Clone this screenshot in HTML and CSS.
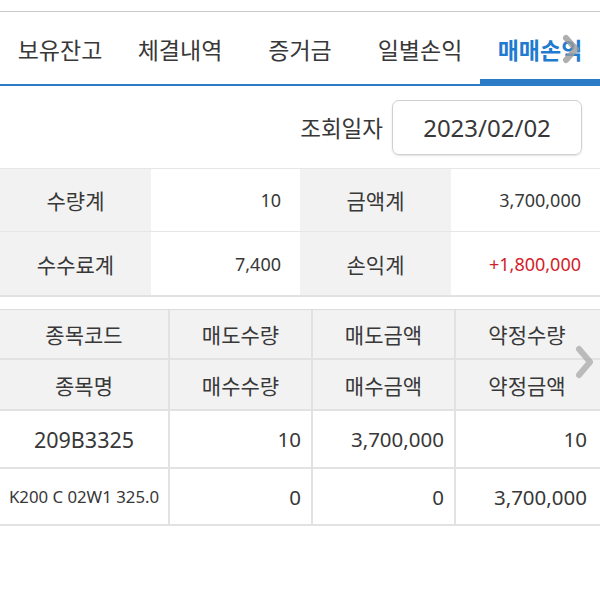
FILE: index.html
```html
<!DOCTYPE html>
<html lang="ko">
<head>
<meta charset="utf-8">
<link rel="stylesheet" href="styles.css">
</head>
<body>
<div class="top-gap"></div>
<nav class="tabs">
  <div class="tab">보유잔고</div>
  <div class="tab">체결내역</div>
  <div class="tab">증거금</div>
  <div class="tab">일별손익</div>
  <div class="tab active">매매손익</div>
  <svg class="tab-arrow" width="18" height="30" viewBox="0 0 18 30"><path d="M4 4 L14 15 L4 26" fill="none" stroke="#9a9a9a" stroke-width="6" stroke-linecap="round" stroke-linejoin="round" opacity="0.8"/></svg>
</nav>
<div class="query">
  <span class="query-label">조회일자</span>
  <div class="date-box">2023/02/02</div>
</div>
<div class="summary">
  <div class="s-label">수량계</div>
  <div class="s-value">10</div>
  <div class="s-label">금액계</div>
  <div class="s-value">3,700,000</div>
  <div class="s-label">수수료계</div>
  <div class="s-value">7,400</div>
  <div class="s-label">손익계</div>
  <div class="s-value red">+1,800,000</div>
</div>
<div class="detail-wrap">
  <div class="detail">
    <div class="h">종목코드</div>
    <div class="h">매도수량</div>
    <div class="h">매도금액</div>
    <div class="h">약정수량</div>
    <div class="h">종목명</div>
    <div class="h">매수수량</div>
    <div class="h">매수금액</div>
    <div class="h">약정금액</div>
    <div class="d center big">209B3325</div>
    <div class="d">10</div>
    <div class="d">3,700,000</div>
    <div class="d">10</div>
    <div class="d center small">K200 C 02W1 325.0</div>
    <div class="d">0</div>
    <div class="d">0</div>
    <div class="d">3,700,000</div>
  </div>
  <svg class="table-arrow" width="20" height="34" viewBox="0 0 20 34"><path d="M4 4 L15 17 L4 30" fill="none" stroke="#a8a8a8" stroke-width="6" stroke-linecap="round" stroke-linejoin="round" opacity="0.75"/></svg>
</div>
</body>
</html>
```
FILE: styles.css
```css
* { box-sizing: border-box; }
body {
  margin: 0;
  background: #fff;
  color: #383838;
  font-family: "Noto Sans", "Noto Sans CJK KR", sans-serif;
  width: 600px;
  overflow: hidden;
}
.top-gap {
  height: 12px;
  border-bottom: 1px solid #c8c8c8;
}
.tabs {
  position: relative;
  display: flex;
  height: 74px;
  border-bottom: 2px solid #2b7bc6;
}
.tab {
  width: 120px;
  display: flex;
  align-items: center;
  justify-content: center;
  font-size: 23px;
  color: #383838;
  padding-top: 2px;
}
.tab.active {
  color: #1f7bd0;
  font-weight: bold;
  box-shadow: inset 0 -5px 0 #2b7bc6;
}
.tab-arrow {
  position: absolute;
  right: 20px;
  top: 22px;
}
.query {
  display: flex;
  align-items: center;
  justify-content: flex-end;
  height: 83px;
  padding-right: 18px;
  border-bottom: 1px solid #e6e6e6;
}
.query-label {
  font-size: 22.5px;
  margin-right: 9px;
}
.date-box {
  width: 190px;
  height: 55px;
  border: 1px solid #d0d0d0;
  border-radius: 7px;
  box-shadow: 0 1px 2px rgba(0,0,0,0.12);
  display: flex;
  align-items: center;
  justify-content: center;
  font-size: 24px;
}
.summary {
  display: grid;
  grid-template-columns: 151px 149px 151px 149px;
  grid-auto-rows: 63px;
  border-bottom: 2px solid #e2e2e2;
}
.s-label, .s-value {
  display: flex;
  align-items: center;
  border-bottom: 1px solid #e6e6e6;
}
.summary > :nth-last-child(-n+4) { border-bottom: none; }
.s-label {
  background: #f2f2f2;
  justify-content: center;
  font-size: 21px;
}
.s-value {
  justify-content: flex-end;
  padding-right: 19px;
  background: #fff;
  font-size: 18px;
}
.red { color: #d21e2b; }
.detail-wrap {
  position: relative;
  margin-top: 12px;
  overflow: hidden;
}
.detail {
  display: grid;
  grid-template-columns: 170px 143px 143px 160px;
  grid-template-rows: 50px 51px 58px 57px;
  width: 616px;
  border-top: 1px solid #dcdcdc;
}
.h, .d {
  display: flex;
  align-items: center;
  border-right: 2px solid #e2e2e2;
  border-bottom: 2px solid #e2e2e2;
}
.h {
  background: #f2f2f2;
  justify-content: center;
  font-size: 21px;
}
.d {
  justify-content: flex-end;
  padding-right: 10px;
  font-size: 20.5px;
}
.d.center { justify-content: center; padding-right: 0; }
.d.big { font-size: 21.5px; }
.d.small { font-size: 16.8px; }
.detail > :nth-child(4n) { padding-right: 27px; }
.detail > .h:nth-child(4n) { padding-right: 16px; }
.table-arrow {
  position: absolute;
  left: 575px;
  top: 36px;
}
```
